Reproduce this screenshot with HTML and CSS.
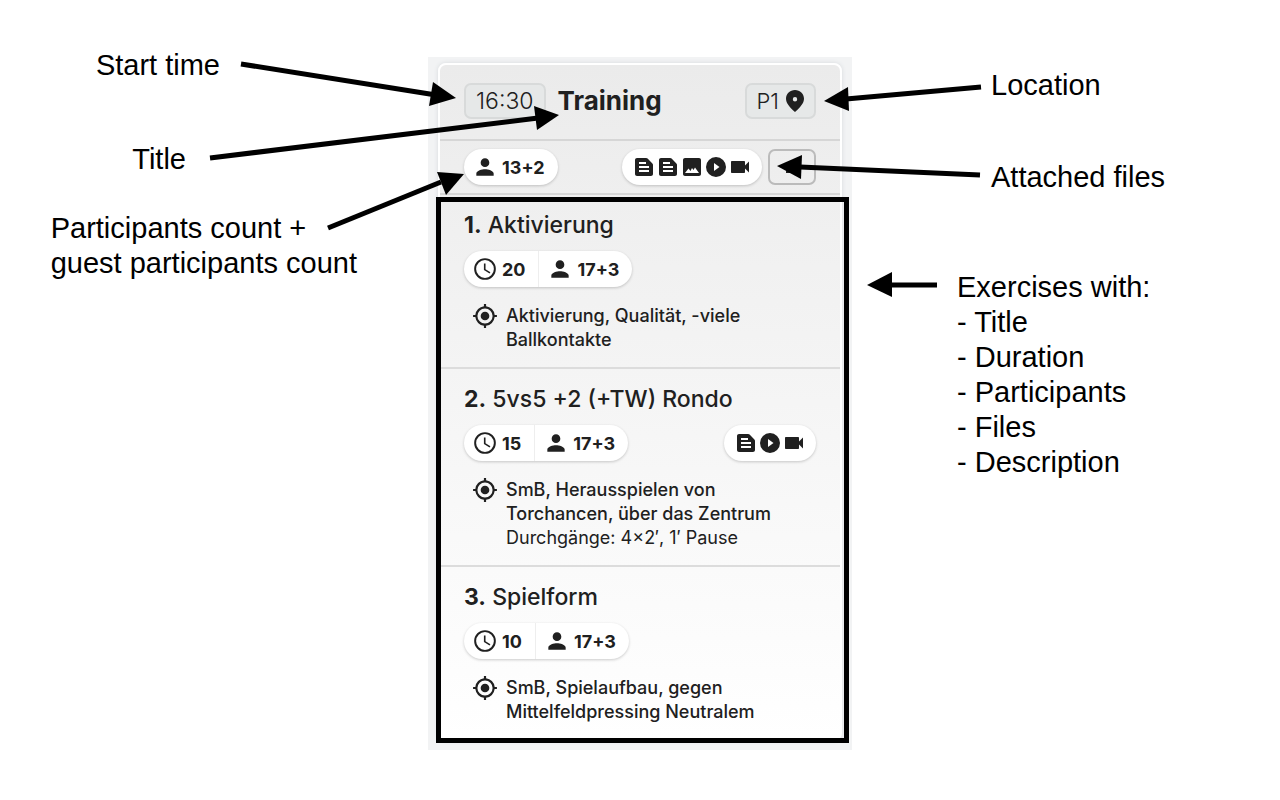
FILE: index.html
```html
<!DOCTYPE html>
<html lang="en">
<head>
<meta charset="utf-8">
<meta name="viewport" content="width=device-width, initial-scale=1">
<title>Training overview</title>
<link rel="stylesheet" href="styles.css">
</head>
<body>
<svg class="sprite" aria-hidden="true">
  <symbol id="person" viewBox="0 0 24 24"><path d="M12 12a4 4 0 1 0 0-8 4 4 0 0 0 0 8zm0 2c-2.700 0-8 1.300-8 4v2h16v-2c0-2.700-5.300-4-8-4z"/></symbol>
  <symbol id="clock" viewBox="0 0 24 24"><path d="M12 2a10 10 0 1 0 0 20 10 10 0 0 0 0-20zm0 18.200a8.200 8.200 0 1 1 0-16.400 8.200 8.200 0 0 1 0 16.400zM12.500 7H11v6l5.200 3.200.8-1.300-4.500-2.700z"/></symbol>
  <symbol id="target" viewBox="0 0 24 24"><path d="M12 8a4 4 0 1 0 0 8 4 4 0 0 0 0-8zm8.940 3A8.990 8.990 0 0 0 13 3.060V1h-2v2.060A8.990 8.990 0 0 0 3.060 11H1v2h2.060A8.990 8.990 0 0 0 11 20.940V23h2v-2.060A8.990 8.990 0 0 0 20.940 13H23v-2zM12 19a7 7 0 1 1 0-14 7 7 0 0 1 0 14z"/></symbol>
  <symbol id="doc" viewBox="0 0 24 24"><path d="M20.410 8.410l-4.830-4.830C15.210 3.210 14.700 3 14.170 3H5c-1.100 0-2 .9-2 2v14c0 1.100.9 2 2 2h14c1.100 0 2-.9 2-2V9.830c0-.53-.21-1.040-.59-1.420zM7 7h7v2H7zm10 10H7v-2h10zm0-4H7v-2h10z"/></symbol>
  <symbol id="image" viewBox="0 0 24 24"><path d="M21 19V5c0-1.100-.9-2-2-2H5c-1.100 0-2 .9-2 2v14c0 1.100.9 2 2 2h14c1.100 0 2-.9 2-2zM5 18l3.500-4.500 2 2.400 1.500-2.900 1.500 2 1.500-2.500L19 18z"/></symbol>
  <symbol id="play" viewBox="0 0 24 24"><path d="M12 2a10 10 0 1 0 0 20 10 10 0 0 0 0-20zm-2 14v-8l5.500 4z"/></symbol>
  <symbol id="video" viewBox="0 0 24 24"><path d="M17 10.500V7c0-.55-.45-1-1-1H4c-.55 0-1 .45-1 1v10c0 .55.45 1 1 1h12c.55 0 1-.45 1-1v-3.500l4 4v-11z"/></symbol>
  <symbol id="pin" viewBox="0 0 24 24"><path fill-rule="evenodd" d="M12 1C7 1 3 4.900 3 9.800c0 4.200 3.400 8.300 9 13.200 5.600-4.900 9-9 9-13.200C21 4.900 17 1 12 1zm0 7a2.200 2.200 0 1 1 0 4.400A2.200 2.200 0 0 1 12 8z"/></symbol>
</svg>

<main class="stage">
  <aside class="notes notes-left">
    <p class="note note-time">Start time</p>
    <p class="note note-title">Title</p>
    <p class="note note-count">Participants count +<br>guest participants count</p>
  </aside>

  <div class="panel">
    <article class="card">
      <header class="card-head">
        <span class="chip chip-time">16:30</span>
        <h1 class="card-title">Training</h1>
        <span class="chip chip-place">P1 <svg class="icon" aria-hidden="true"><use href="#pin"/></svg></span>
      </header>
      <div class="meta">
        <div class="pill"><span class="stat"><svg class="icon stat-icon" aria-hidden="true"><use href="#person"/></svg>13+2</span></div>
        <div class="pill files">
          <svg class="icon" aria-hidden="true"><use href="#doc"/></svg>
          <svg class="icon" aria-hidden="true"><use href="#doc"/></svg>
          <svg class="icon" aria-hidden="true"><use href="#image"/></svg>
          <svg class="icon" aria-hidden="true"><use href="#play"/></svg>
          <svg class="icon" aria-hidden="true"><use href="#video"/></svg>
        </div>
        <button class="profile" type="button" aria-label="Participants"><svg class="icon profile-icon" aria-hidden="true"><use href="#person"/></svg></button>
      </div>
      <section class="exercises">
        <section class="exercise">
          <h2 class="exercise-title"><b>1.</b> Aktivierung</h2>
          <div class="row">
            <div class="pill">
              <span class="stat"><svg class="icon stat-icon" aria-hidden="true"><use href="#clock"/></svg>20</span>
              <span class="stat"><svg class="icon stat-icon" aria-hidden="true"><use href="#person"/></svg>17+3</span>
            </div>
          </div>
          <div class="goal">
            <svg class="icon stat-icon" aria-hidden="true"><use href="#target"/></svg>
            <p class="goal-text">Aktivierung, Qualität, -viele<br>Ballkontakte</p>
          </div>
        </section>
        <section class="exercise">
          <h2 class="exercise-title"><b>2.</b> 5vs5 +2 (+TW) Rondo</h2>
          <div class="row">
            <div class="pill">
              <span class="stat"><svg class="icon stat-icon" aria-hidden="true"><use href="#clock"/></svg>15</span>
              <span class="stat"><svg class="icon stat-icon" aria-hidden="true"><use href="#person"/></svg>17+3</span>
            </div>
            <div class="pill files">
              <svg class="icon" aria-hidden="true"><use href="#doc"/></svg>
              <svg class="icon" aria-hidden="true"><use href="#play"/></svg>
              <svg class="icon" aria-hidden="true"><use href="#video"/></svg>
            </div>
          </div>
          <div class="goal">
            <svg class="icon stat-icon" aria-hidden="true"><use href="#target"/></svg>
            <p class="goal-text">SmB, Herausspielen von<br>Torchancen, über das Zentrum<br><span class="sets">Durchgänge: 4×2′, 1′ Pause</span></p>
          </div>
        </section>
        <section class="exercise">
          <h2 class="exercise-title"><b>3.</b> Spielform</h2>
          <div class="row">
            <div class="pill">
              <span class="stat"><svg class="icon stat-icon" aria-hidden="true"><use href="#clock"/></svg>10</span>
              <span class="stat"><svg class="icon stat-icon" aria-hidden="true"><use href="#person"/></svg>17+3</span>
            </div>
          </div>
          <div class="goal">
            <svg class="icon stat-icon" aria-hidden="true"><use href="#target"/></svg>
            <p class="goal-text">SmB, Spielaufbau, gegen<br>Mittelfeldpressing Neutralem</p>
          </div>
        </section>
      </section>
    </article>
  </div>

  <aside class="notes notes-right">
    <p class="note note-place">Location</p>
    <p class="note note-files">Attached files</p>
    <div class="note note-list">
      <p>Exercises with:</p>
      <p>- Title</p>
      <p>- Duration</p>
      <p>- Participants</p>
      <p>- Files</p>
      <p>- Description</p>
    </div>
  </aside>

  <svg class="arrows" viewBox="0 0 1280 800" aria-hidden="true">
    <g stroke="#000" stroke-width="5">
      <path d="M241 64L436 95"/>
      <path d="M210 158L538 118"/>
      <path d="M328 228L441 182"/>
      <path d="M981 87L846 99"/>
      <path d="M980 175L800 167"/>
      <path d="M937 285H890"/>
    </g>
    <path d="M456 98L433 82L429 106z"/>
    <path d="M559 115L534 106L537 130z"/>
    <path d="M464 174L437 172L446 195z"/>
    <path d="M824 101L848 87L849 111z"/>
    <path d="M777 166L802 155L801 179z"/>
    <path d="M867 285L892 272V297z"/>
  </svg>
</main>
</body>
</html>
```
FILE: styles.css
```css
* {
  box-sizing: border-box;
}

body {
  margin: 0;
  background: #fff;
  color: #202020;
  font-family: Inter, "Noto Sans", sans-serif;
}

h1, h2, p {
  margin: 0;
}

.sprite {
  display: none;
}

.icon {
  width: 24px;
  height: 24px;
  flex: none;
  fill: currentColor;
}

.stage {
  position: relative;
  display: grid;
  grid-template-columns: 1fr 424px 1fr;
  align-items: start;
  padding: 48px 0 50px;
}

/* Annotations */

.notes {
  display: flex;
  flex-direction: column;
  color: #000;
  font-family: "Liberation Sans", Arial, sans-serif;
  font-size: 29px;
  line-height: 35px;
}

.notes-left {
  align-items: flex-end;
}

.notes-right {
  align-items: flex-start;
  padding-top: 20px;
}

.note {
  white-space: nowrap;
}

.note-time {
  margin-right: 208px;
}

.note-title {
  margin-top: 59px;
  margin-right: 242px;
}

.note-count {
  margin-top: 34px;
  margin-right: 71px;
}

.note-place {
  margin-left: 139px;
}

.note-files {
  margin-top: 57px;
  margin-left: 139px;
}

.note-list {
  margin-top: 75px;
  margin-left: 105px;
}

.arrows {
  position: absolute;
  top: 0;
  left: 50%;
  width: 1280px;
  height: 800px;
  margin-left: -640px;
  pointer-events: none;
}

/* Card */

.panel {
  margin-top: 9px;
  padding: 6px 10px 9px;
  background: #f2f3f4;
}

.card {
  border: 2px solid #fff;
  border-radius: 8px;
  background: linear-gradient(#ebebeb, #fff);
  box-shadow: 0 0 4px #d5d8dc;
}

.card-head {
  display: flex;
  align-items: center;
  gap: 12px;
  height: 76px;
  padding: 0 24px 3px;
  border-bottom: 2px solid #d6d6d6;
}

.card-title {
  flex: 1;
  font-size: 26px;
  line-height: 32px;
  font-weight: 700;
}

.chip {
  display: flex;
  align-items: center;
  justify-content: center;
  gap: 4px;
  height: 36px;
  padding: 0 7px 0 10px;
  border: 2px solid #d8dada;
  border-radius: 7px;
  background: #e6e8e8;
  font-size: 22px;
  font-weight: 300;
}

.chip-time {
  padding: 0 10px;
  font-size: 23px;
}

.meta {
  display: flex;
  align-items: center;
  gap: 6px;
  padding: 8px 24px;
  border-bottom: 2px solid #d6d6d6;
}

.pill {
  display: flex;
  height: 36px;
  border-radius: 18px;
  background: #fff;
  box-shadow: 0 1px 3px rgba(0, 0, 0, 0.2);
}

.stat {
  display: flex;
  align-items: center;
  gap: 4px;
  padding: 0 13px 0 8px;
  font-size: 18px;
  font-weight: 700;
}

.stat + .stat {
  border-left: 1px solid #eee;
}

.stat-icon {
  width: 26px;
  height: 26px;
}

.files {
  align-items: center;
  margin-left: auto;
  padding: 0 10px;
}

.profile {
  display: flex;
  align-items: center;
  justify-content: center;
  width: 48px;
  height: 36px;
  padding: 0;
  border: 2px solid #bbb;
  border-radius: 7px;
  background: transparent;
  color: #202020;
}

.profile-icon {
  width: 18px;
  height: 18px;
}

.exercises {
  position: relative;
}

/* Highlight frame around the exercise list */
.exercises::after {
  content: "";
  position: absolute;
  inset: 2px -9px -4px -4px;
  border: 5px solid #000;
  pointer-events: none;
}

.exercise {
  padding: 16px 24px 15px;
}

.exercise + .exercise {
  border-top: 2px solid #dcdcdc;
}

.exercise-title {
  font-size: 23px;
  line-height: 28px;
  font-weight: 500;
}

.row {
  display: flex;
  margin: 12px 0 16px;
}

.goal {
  display: flex;
  gap: 8px;
  padding-left: 8px;
}

.goal-text {
  padding-top: 1px;
  font-size: 18px;
  line-height: 24px;
  font-weight: 500;
}

.sets {
  font-weight: 400;
}
```
